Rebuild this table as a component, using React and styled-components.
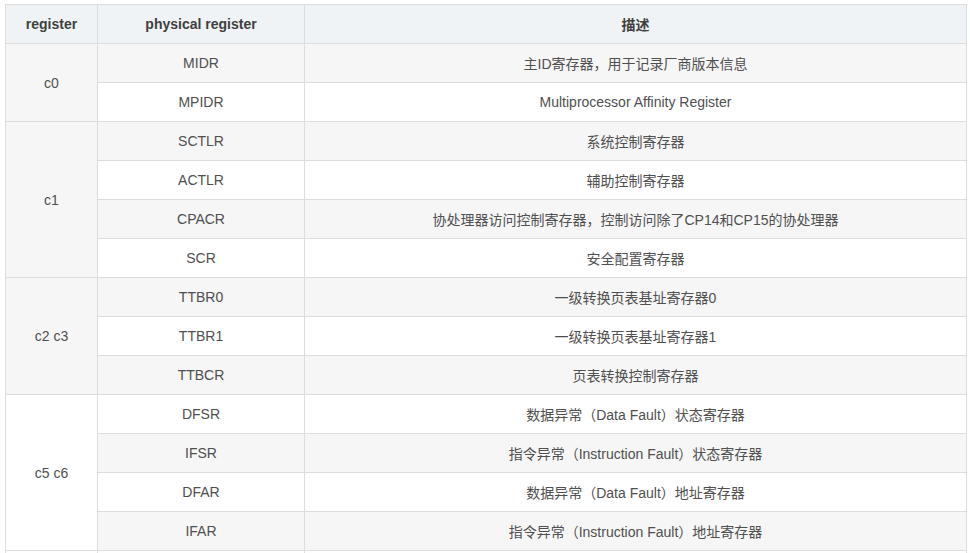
import React from "react";
import styled, { createGlobalStyle } from "styled-components";

const Global = createGlobalStyle`
  html, body { margin: 0; padding: 0; background: #fff; }
  body { font-family: "Liberation Sans", Arial, "Noto Sans CJK SC", sans-serif; }
`;

const Wrap = styled.div`
  padding: 4px 0 0 5px;
  width: 962px;
`;

const Table = styled.table`
  border-collapse: collapse;
  width: 962px;
  table-layout: fixed;
  font-size: 14px;
  color: #4f4f4f;
  font-family: "Liberation Sans", Arial, "Noto Sans CJK SC", sans-serif;
`;

const Th = styled.th`
  height: 39px;
  padding: 0 8px;
  background: #eff3f5;
  border: 1px solid #ddd;
  color: #3f3f3f;
  font-weight: bold;
  text-align: center;
  box-sizing: border-box;
`;

const Row = styled.tr`
  background: ${(p) => (p.$odd ? "#f6f6f6" : "#fff")};
`;

const Td = styled.td`
  height: 39px;
  padding: 0 8px;
  border: 1px solid #ddd;
  text-align: center;
  vertical-align: middle;
  box-sizing: border-box;
`;

const groups = [
  { reg: "c0", rows: [["MIDR", "主ID寄存器，用于记录厂商版本信息"], ["MPIDR", "Multiprocessor Affinity Register"]] },
  {
    reg: "c1",
    rows: [
      ["SCTLR", "系统控制寄存器"],
      ["ACTLR", "辅助控制寄存器"],
      ["CPACR", "协处理器访问控制寄存器，控制访问除了CP14和CP15的协处理器"],
      ["SCR", "安全配置寄存器"],
    ],
  },
  {
    reg: "c2 c3",
    rows: [
      ["TTBR0", "一级转换页表基址寄存器0"],
      ["TTBR1", "一级转换页表基址寄存器1"],
      ["TTBCR", "页表转换控制寄存器"],
    ],
  },
  {
    reg: "c5 c6",
    rows: [
      ["DFSR", "数据异常（Data Fault）状态寄存器"],
      ["IFSR", "指令异常（Instruction Fault）状态寄存器"],
      ["DFAR", "数据异常（Data Fault）地址寄存器"],
      ["IFAR", "指令异常（Instruction Fault）地址寄存器"],
    ],
  },
  { reg: "", rows: [["", ""]] },
];

export default function App() {
  let idx = 0;
  return (
    <Wrap>
      <Global />
      <Table>
        <colgroup>
          <col style={{ width: 92 }} />
          <col style={{ width: 207 }} />
          <col />
        </colgroup>
        <thead>
          <tr>
            <Th>register</Th>
            <Th>physical register</Th>
            <Th>描述</Th>
          </tr>
        </thead>
        <tbody>
          {groups.map((g, gi) =>
            g.rows.map((r, i) => {
              idx += 1;
              return (
                <Row key={gi + "-" + i} $odd={idx % 2 === 1}>
                  {i === 0 && <Td rowSpan={g.rows.length}>{g.reg}</Td>}
                  <Td>{r[0]}</Td>
                  <Td>{r[1]}</Td>
                </Row>
              );
            })
          )}
        </tbody>
      </Table>
    </Wrap>
  );
}
